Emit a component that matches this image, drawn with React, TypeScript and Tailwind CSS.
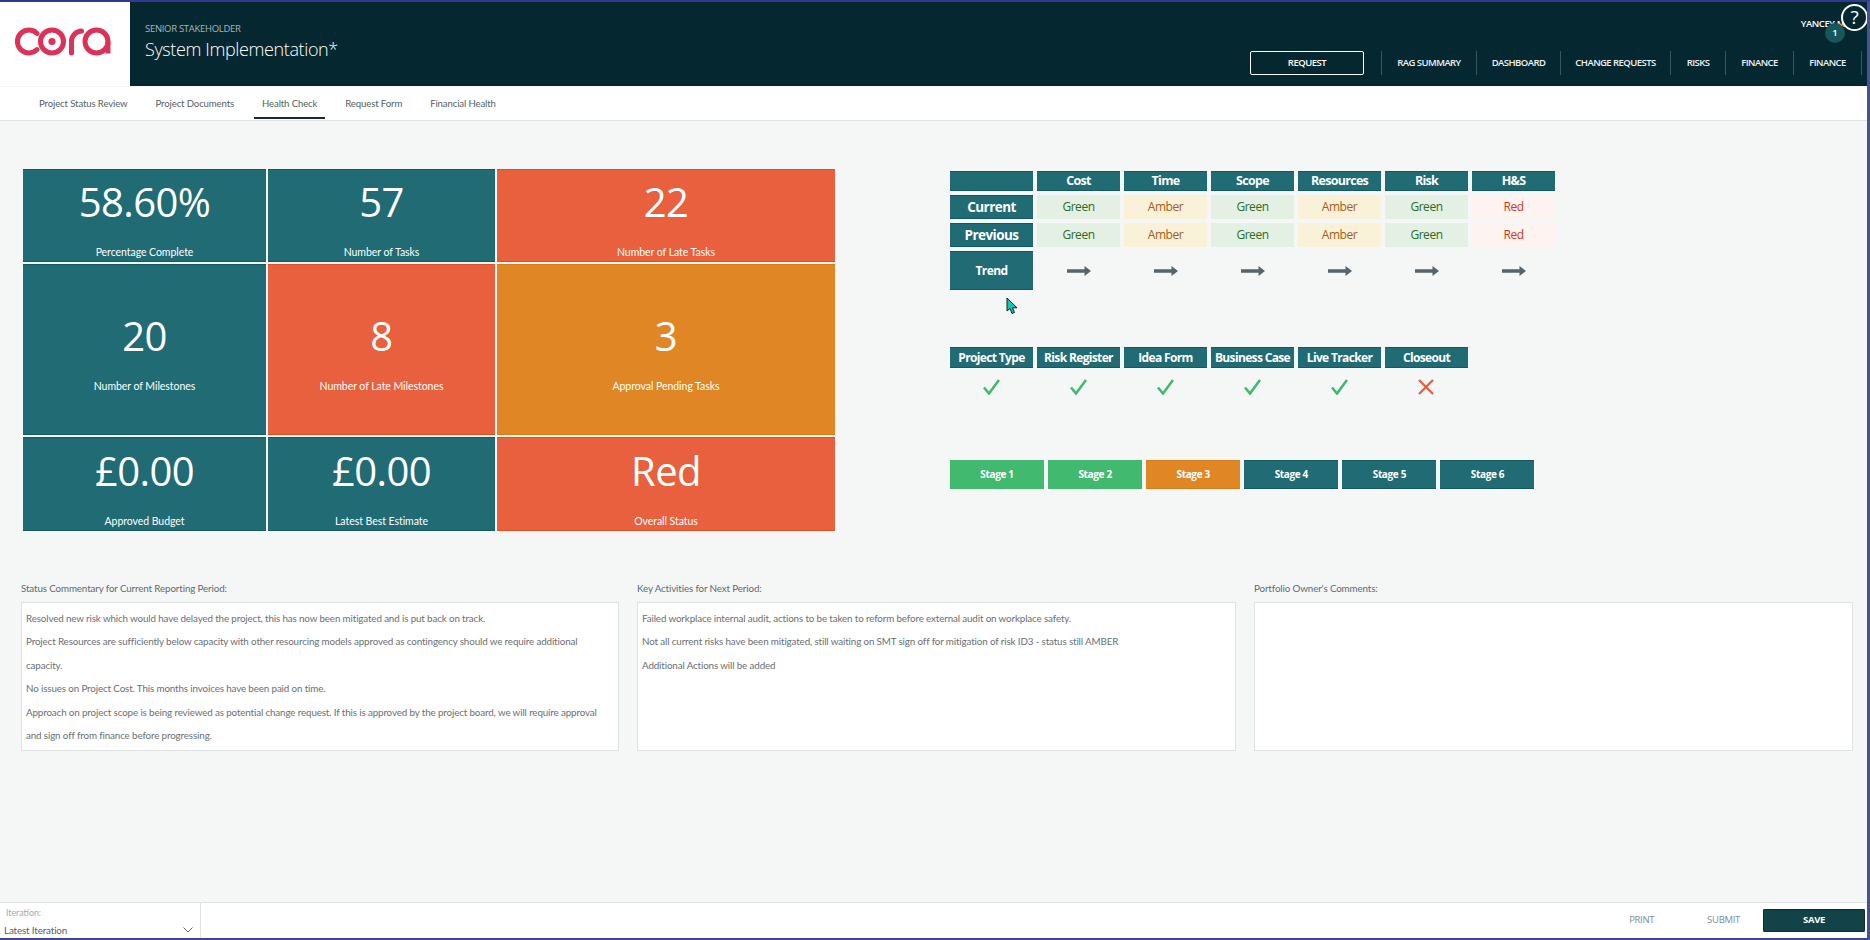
import React from "react";

const navItems: [string, string][] = [
  ["RAG SUMMARY", "w-[95px]"],
  ["DASHBOARD", "w-[84px]"],
  ["CHANGE REQUESTS", "w-[110px]"],
  ["RISKS", "w-[55px]"],
  ["FINANCE", "w-[68px]"],
  ["FINANCE", "w-[68px]"],
];

const subNav = ["Project Status Review", "Project Documents", "Health Check", "Request Form", "Financial Health"];

const teal = "bg-[#206b74] border-[#125a63]";
const red = "bg-[#e8603d] border-[#df4f22]";
const orange = "bg-[#e08625] border-[#d97d12]";

const tiles: [string, string, string][] = [
  ["58.60%", "Percentage Complete", teal],
  ["57", "Number of Tasks", teal],
  ["22", "Number of Late Tasks", red],
  ["20", "Number of Milestones", teal],
  ["8", "Number of Late Milestones", red],
  ["3", "Approval Pending Tasks", orange],
  ["£0.00", "Approved Budget", teal],
  ["£0.00", "Latest Best Estimate", teal],
  ["Red", "Overall Status", red],
];

const ragHead = ["", "Cost", "Time", "Scope", "Resources", "Risk", "H&S"];
const ragVals = ["Green", "Amber", "Green", "Amber", "Green", "Red"];
const ragClass: Record<string, string> = {
  Green: "bg-[#e4f0e3] text-[#2f6b22]",
  Amber: "bg-[#f9f2d9] text-[#a85c16]",
  Red: "bg-[#fdf3f0] text-[#d2391c]",
};

const docs: [string, boolean][] = [
  ["Project Type", true],
  ["Risk Register", true],
  ["Idea Form", true],
  ["Business Case", true],
  ["Live Tracker", true],
  ["Closeout", false],
];

const stages: [string, string][] = [
  ["Stage 1", "bg-[#41b96f] border-[#41b96f]"],
  ["Stage 2", "bg-[#41b96f] border-[#41b96f]"],
  ["Stage 3", "bg-[#e08625] border-[#d97d12]"],
  ["Stage 4", "bg-[#206b74] border-[#125a63]"],
  ["Stage 5", "bg-[#206b74] border-[#125a63]"],
  ["Stage 6", "bg-[#206b74] border-[#125a63]"],
];

const comments: [string, string[], string][] = [
  [
    "Status Commentary for Current Reporting Period:",
    [
      "Resolved new risk which would have delayed the project, this has now been mitigated and is put back on track.",
      "Project Resources are sufficiently below capacity with other resourcing models approved as contingency should we require additional",
      "capacity.",
      "No issues on Project Cost. This months invoices have been paid on time.",
      "Approach on project scope is being reviewed as potential change request. If this is approved by the project board, we will require approval",
      "and sign off from finance before progressing.",
    ],
    "w-[598px]",
  ],
  [
    "Key Activities for Next Period:",
    [
      "Failed workplace internal audit, actions to be taken to reform before external audit on workplace safety.",
      "Not all current risks have been mitigated, still waiting on SMT sign off for mitigation of risk ID3 - status still AMBER",
      "Additional Actions will be added",
    ],
    "w-[599px]",
  ],
  ["Portfolio Owner's Comments:", [], "w-[599px]"],
];

function Logo() {
  return (
    <svg width="130" height="84" viewBox="0 2 130 84" fill="none" stroke="#dc3259" strokeWidth="5" strokeLinecap="round">
      <path d="M37.1 33.4A11.5 11.5 0 1 0 37.1 49.6" />
      <circle cx="52" cy="41.5" r="11.5" />
      <circle cx="52" cy="41.5" r="3.6" fill="#dc3259" stroke="none" />
      <path d="M71.5 53V41.5A10.5 10.5 0 0 1 81.5 31" />
      <circle cx="96.5" cy="41.5" r="11.5" />
      <path d="M108 41.5V53.5" strokeLinecap="butt" />
    </svg>
  );
}

function Arrow() {
  return (
    <svg width="24" height="12" viewBox="0 0 24 12" fill="#56646c">
      <path d="M0 4.3H17.5V1L24 6L17.5 11V7.7H0Z" />
    </svg>
  );
}

function Check() {
  return (
    <svg width="17" height="16" viewBox="0 0 17 16" fill="none" stroke="#41b96f" strokeWidth="2.6">
      <path d="M1 8.5L6 14.5L16 1" />
    </svg>
  );
}

function Cross() {
  return (
    <svg width="16" height="16" viewBox="0 0 16 16" fill="none" stroke="#e8603d" strokeWidth="2.4">
      <path d="M1 1L15 15M15 1L1 15" />
    </svg>
  );
}

function Cursor() {
  return (
    <svg width="12" height="18" viewBox="0 0 12 18">
      <path d="M1 1V14L4 11.5L6 16.5L8.5 15.5L6.5 10.8H11Z" fill="#13c4b4" stroke="#10212a" strokeWidth="1" />
    </svg>
  );
}

export default function App() {
  return (
    <div className="relative w-[1870px] h-[940px] flex flex-col overflow-hidden bg-[#f5f7f7] border-t-2 border-b-2 border-r-[3px] border-t-[#2f3a8c] border-b-[#3d4494] border-r-[#4a4f9a] font-['Open_Sans',sans-serif]">
      {/* Header */}
      <header className="flex h-[84px] shrink-0 bg-[#05272f]">
        <div className="w-[130px] bg-white">
          <Logo />
        </div>
        <div className="flex-1 flex justify-between pl-[15px]">
          <div className="pt-[20px]">
            <div className="text-[9.5px] leading-[14px] text-[#a9b5b9] tracking-[-0.3px]">SENIOR STAKEHOLDER</div>
            <div className="text-[18px] leading-[26px] text-white font-light tracking-[-0.38px]">System Implementation*</div>
          </div>
          <div className="relative flex items-end pb-[11px] pr-[5px]">
            <div className="w-[114px] h-[24px] mr-[17px] flex items-center justify-center rounded-[2px] border-[1.5px] border-white text-[9.5px] font-semibold tracking-[-0.5px] text-white">
              REQUEST
            </div>
            <div className="flex border-l border-[#3b5560]">
              {navItems.map(([label, w], i) => (
                <div key={i} className={`${w} h-[24px] flex items-center justify-center border-r border-[#3b5560] text-[9.5px] font-semibold tracking-[-0.55px] text-[#eef3f4]`}>
                  {label}
                </div>
              ))}
            </div>
            <div className="absolute right-[22px] top-[15px] text-[9.5px] font-semibold tracking-[-0.4px] text-white whitespace-nowrap">YANCEY M</div>
            <div className="absolute right-[-1px] top-[2px] w-[27px] h-[27px] rounded-full border-2 border-white bg-[#05272f] flex items-center justify-center text-[19px] leading-none text-white">?</div>
            <div className="absolute right-[22px] top-[21px] w-[20px] h-[20px] rounded-full bg-[#19565a] flex items-center justify-center text-[9.5px] font-semibold text-white">1</div>
          </div>
        </div>
      </header>

      {/* Sub navigation */}
      <nav className="flex h-[34px] shrink-0 items-stretch gap-[12px] pl-[31px] mt-[1px] bg-white border-b border-[#dfe3e3] font-['Lato',sans-serif]">
        {subNav.map((s, i) => (
          <div
            key={s}
            className={`flex items-center px-[8px] pt-[5px] mb-[1px] text-[9.6px] tracking-[-0.13px] text-[#555f63] whitespace-nowrap border-b-2 ${i === 2 ? "border-[#1e2a30]" : "border-transparent"}`}
          >
            {s}
          </div>
        ))}
      </nav>

      {/* Main */}
      <main className="flex-1 pt-[48px]">
        <div className="flex pl-[23px]">
          <div className="grid grid-cols-[243px_227px_338px] grid-rows-[93px_171px_94px] gap-x-[2px] gap-y-[2px] w-[812px]">
            {tiles.map(([n, l, c]) => (
              <div key={l} className={`${c} border-y flex flex-col items-center justify-center pt-[4px] text-white`}>
                <div className="text-[40px] leading-[54px] tracking-[-0.6px]">{n}</div>
                <div className="font-['Lato',sans-serif] text-[10.5px] leading-[16px] mt-[15px] tracking-[-0.05px]">{l}</div>
              </div>
            ))}
          </div>

          <div className="ml-[115px] pt-[2px]">
            <div className="grid grid-cols-[repeat(7,83px)] grid-rows-[20px_24px_24px_39px] gap-x-[4px] gap-y-[4px]">
              {ragHead.map((h, i) => (
                <div key={i} className="bg-[#206b74] border-y border-[#125a63] flex items-center justify-center text-[12.5px] font-bold tracking-[-0.7px] text-white">
                  {h}
                </div>
              ))}
              {["Current", "Previous"].map((row) => (
                <React.Fragment key={row}>
                  <div className="bg-[#206b74] border-y border-[#125a63] flex items-center justify-center text-[13.5px] font-bold tracking-[-0.55px] text-white">{row}</div>
                  {ragVals.map((v, i) => (
                    <div key={i} className={`${ragClass[v]} flex items-center justify-center text-[12px] tracking-[-0.45px]`}>
                      {v}
                    </div>
                  ))}
                </React.Fragment>
              ))}
              <div className="bg-[#206b74] border-y border-[#125a63] flex items-center justify-center text-[12px] font-bold tracking-[-0.6px] text-white">Trend</div>
              {ragVals.map((_, i) => (
                <div key={i} className="flex items-center justify-center">
                  <Arrow />
                </div>
              ))}
            </div>

            <div className="grid grid-cols-[repeat(6,83px)] grid-rows-[21px_39px] gap-x-[4px] mt-[57px]">
              {docs.map(([d]) => (
                <div key={d} className="bg-[#206b74] border-y border-[#125a63] flex items-center justify-center text-[12px] font-bold tracking-[-0.65px] text-white whitespace-nowrap">
                  {d}
                </div>
              ))}
              {docs.map(([d, ok]) => (
                <div key={d} className="flex items-center justify-center pr-[1px] pb-[1px]">
                  {ok ? <Check /> : <Cross />}
                </div>
              ))}
            </div>

            <div className="flex gap-[4.1px] mt-[53px]">
              {stages.map(([s, c]) => (
                <div key={s} className={`${c} border-y w-[94px] h-[29px] flex items-center justify-center text-[10px] font-bold tracking-[-0.35px] text-white`}>
                  {s}
                </div>
              ))}
            </div>
          </div>
        </div>

        <div className="flex gap-[18px] pl-[21px] mt-[50px] font-['Lato',sans-serif]">
          {comments.map(([label, lines, w]) => (
            <div key={label} className={w}>
              <div className="text-[9.8px] leading-[14px] tracking-[-0.13px] text-[#5f6a6e] mb-[7px]">{label}</div>
              <div className="h-[149px] bg-white border border-[#dfe3e3] px-[4px] py-[4px]">
                {lines.map((t) => (
                  <div key={t} className="text-[9.8px] leading-[23.4px] tracking-[-0.13px] text-[#6a6f72] whitespace-nowrap">
                    {t}
                  </div>
                ))}
              </div>
            </div>
          ))}
        </div>
      </main>

      {/* Footer */}
      <footer className="flex h-[36px] shrink-0 bg-white border-t border-[#dfe3e3]">
        <div className="w-[201px] border-r border-[#dfe3e3] flex flex-col pl-[4px] pr-[7px] pt-[3px] font-['Lato',sans-serif]">
          <div className="pl-[2px] text-[8.8px] leading-[14px] text-[#a3a9ab]">Iteration:</div>
          <div className="flex items-center justify-between mt-[3px]">
            <span className="text-[9.8px] leading-[14px] tracking-[-0.13px] text-[#555f63]">Latest Iteration</span>
            <svg width="10" height="6" viewBox="0 0 10 6" fill="none" stroke="#5a6468" strokeWidth="1">
              <path d="M0.5 0.5L5 5L9.5 0.5" />
            </svg>
          </div>
        </div>
        <div className="flex-1 flex items-center justify-end pr-[2px]">
          <span className="text-[9.5px] tracking-[-0.35px] text-[#7b8d95]">PRINT</span>
          <span className="text-[9.5px] tracking-[-0.3px] text-[#7b8d95] ml-[53px]">SUBMIT</span>
          <div className="w-[102px] h-[23px] ml-[23px] rounded-[1px] bg-[#124348] border border-[#0b2f34] flex items-center justify-center text-[9.5px] font-bold tracking-[-0.3px] text-white">
            SAVE
          </div>
        </div>
      </footer>

      <div className="absolute left-[1006px] top-[295px]">
        <Cursor />
      </div>
    </div>
  );
}
